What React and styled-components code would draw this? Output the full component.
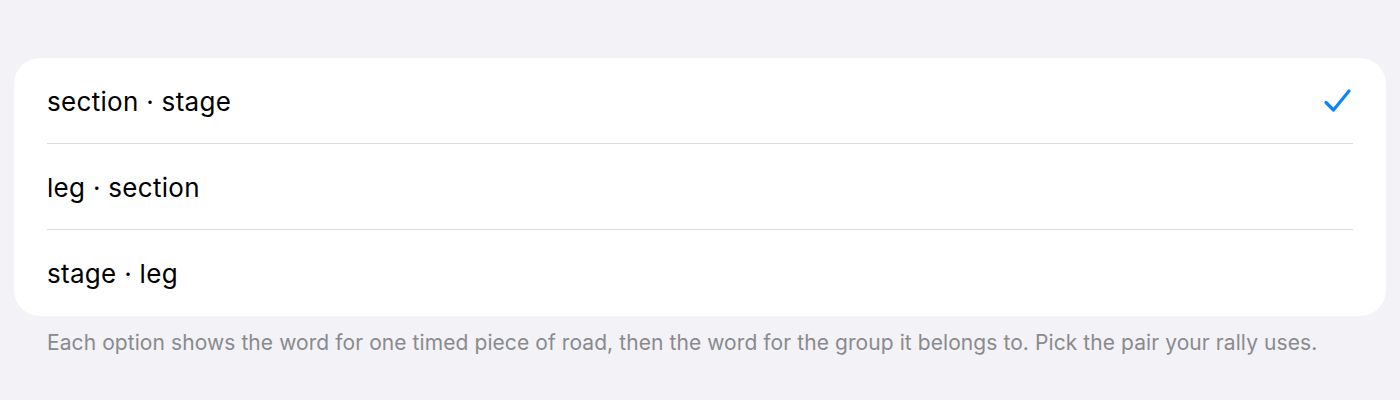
import styled, { createGlobalStyle } from "styled-components";

const GlobalStyle = createGlobalStyle`
  body {
    margin: 0;
    background: #f2f2f7;
    font-family: Inter, "Noto Sans", sans-serif;
  }
`;

const Page = styled.div`
  padding: 58px 14px 0;
  height: 400px;
  box-sizing: border-box;
`;

const Group = styled.div`
  background: #ffffff;
  border-radius: 26px;
  overflow: hidden;
`;

const Row = styled.div`
  display: flex;
  align-items: center;
  justify-content: space-between;
  height: 86px;
  padding: 0 33px;
  position: relative;

  &:not(:last-child)::after {
    content: "";
    position: absolute;
    left: 33px;
    right: 33px;
    bottom: 0;
    height: 1px;
    background: #dcdce0;
  }
`;

const Label = styled.span`
  font-size: 26px;
  color: #000;
  letter-spacing: 0.3px;
`;

const Footer = styled.p`
  margin: 14px 33px 0;
  font-size: 21px;
  letter-spacing: 0.08px;
  color: #8a8a8e;
`;

function Check() {
  return (
    <svg width="30" height="26" viewBox="0 0 30 26" fill="none">
      <path
        d="M3 14.5 L10.5 22 L26 3"
        stroke="#0a84ff"
        strokeWidth="3.2"
        strokeLinecap="round"
        strokeLinejoin="round"
      />
    </svg>
  );
}

const options = [
  { label: "section · stage", selected: true },
  { label: "leg · section" },
  { label: "stage · leg" },
];

export default function App() {
  return (
    <>
      <GlobalStyle />
      <Page>
        <Group>
          {options.map((o) => (
            <Row key={o.label}>
              <Label>{o.label}</Label>
              {o.selected && <Check />}
            </Row>
          ))}
        </Group>
        <Footer>
          Each option shows the word for one timed piece of road, then the word
          for the group it belongs to. Pick the pair your rally uses.
        </Footer>
      </Page>
    </>
  );
}
